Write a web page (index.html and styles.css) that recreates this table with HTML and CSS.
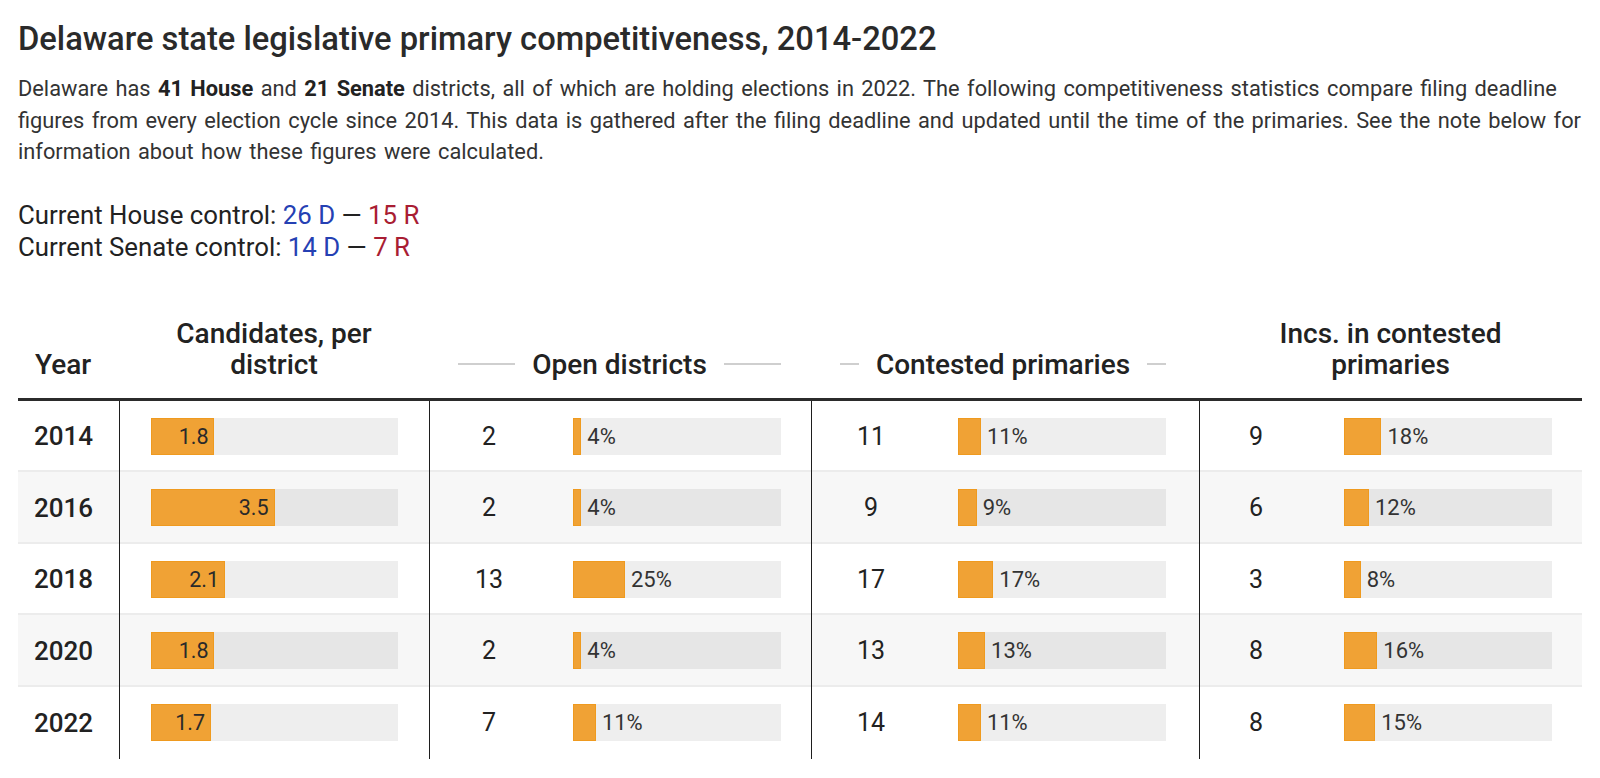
FILE: index.html
```html
<!DOCTYPE html>
<html lang="en">
<head>
<meta charset="utf-8">
<title>Delaware state legislative primary competitiveness, 2014-2022</title>
<link rel="stylesheet" href="styles.css">
</head>
<body>
<div class="page">
  <h1 class="title">Delaware state legislative primary competitiveness, 2014-2022</h1>
  <p class="intro">Delaware has <b>41 House</b> and <b>21 Senate</b> districts, all of which are holding elections in 2022. The following competitiveness statistics compare filing deadline figures from every election cycle since 2014. This data is gathered after the filing deadline and updated until the time of the primaries. See the note below for information about how these figures were calculated.</p>
  <div class="control">
    <div>Current House control: <span class="dem">26 D</span> — <span class="rep">15 R</span></div>
    <div>Current Senate control: <span class="dem">14 D</span> — <span class="rep">7 R</span></div>
  </div>

  <div class="table">
    <div class="head">
      <div class="hcell hyear">Year</div>
      <div class="hcell hcand">Candidates, per<br>district</div>
      <div class="hcell hopen"><span class="rule"></span><span>Open districts</span><span class="rule"></span></div>
      <div class="hcell hcont"><span class="rule"></span><span>Contested primaries</span><span class="rule"></span></div>
      <div class="hcell hinc">Incs. in contested<br>primaries</div>
    </div>

    <div class="row">
      <div class="cell year">2014</div>
      <div class="cell cand"><div class="track"><div class="bar in" style="width:25.7%">1.8</div></div></div>
      <div class="cell pair"><div class="num">2</div><div class="track"><div class="bar" style="width:4%"></div><span class="pct">4%</span></div></div>
      <div class="cell pair cont"><div class="num">11</div><div class="track"><div class="bar" style="width:11%"></div><span class="pct">11%</span></div></div>
      <div class="cell pair inc"><div class="num">9</div><div class="track"><div class="bar" style="width:18%"></div><span class="pct">18%</span></div></div>
    </div>
    <div class="row alt">
      <div class="cell year">2016</div>
      <div class="cell cand"><div class="track"><div class="bar in" style="width:50%">3.5</div></div></div>
      <div class="cell pair"><div class="num">2</div><div class="track"><div class="bar" style="width:4%"></div><span class="pct">4%</span></div></div>
      <div class="cell pair cont"><div class="num">9</div><div class="track"><div class="bar" style="width:9%"></div><span class="pct">9%</span></div></div>
      <div class="cell pair inc"><div class="num">6</div><div class="track"><div class="bar" style="width:12%"></div><span class="pct">12%</span></div></div>
    </div>
    <div class="row">
      <div class="cell year">2018</div>
      <div class="cell cand"><div class="track"><div class="bar in" style="width:30%">2.1</div></div></div>
      <div class="cell pair"><div class="num">13</div><div class="track"><div class="bar" style="width:25%"></div><span class="pct">25%</span></div></div>
      <div class="cell pair cont"><div class="num">17</div><div class="track"><div class="bar" style="width:17%"></div><span class="pct">17%</span></div></div>
      <div class="cell pair inc"><div class="num">3</div><div class="track"><div class="bar" style="width:8%"></div><span class="pct">8%</span></div></div>
    </div>
    <div class="row alt">
      <div class="cell year">2020</div>
      <div class="cell cand"><div class="track"><div class="bar in" style="width:25.7%">1.8</div></div></div>
      <div class="cell pair"><div class="num">2</div><div class="track"><div class="bar" style="width:4%"></div><span class="pct">4%</span></div></div>
      <div class="cell pair cont"><div class="num">13</div><div class="track"><div class="bar" style="width:13%"></div><span class="pct">13%</span></div></div>
      <div class="cell pair inc"><div class="num">8</div><div class="track"><div class="bar" style="width:16%"></div><span class="pct">16%</span></div></div>
    </div>
    <div class="row last">
      <div class="cell year">2022</div>
      <div class="cell cand"><div class="track"><div class="bar in" style="width:24.3%">1.7</div></div></div>
      <div class="cell pair"><div class="num">7</div><div class="track"><div class="bar" style="width:11%"></div><span class="pct">11%</span></div></div>
      <div class="cell pair cont"><div class="num">14</div><div class="track"><div class="bar" style="width:11%"></div><span class="pct">11%</span></div></div>
      <div class="cell pair inc"><div class="num">8</div><div class="track"><div class="bar" style="width:15%"></div><span class="pct">15%</span></div></div>
    </div>
  </div>
</div>
</body>
</html>
```

FILE: styles.css
```css
* { box-sizing: border-box; }
html, body { margin: 0; padding: 0; background: #fff; }
body {
  font-family: Roboto, "Liberation Sans", Arial, sans-serif;
  color: #222;
}
.page {
  padding: 21px 0 0 18px;
}
.title {
  margin: 0;
  font-size: 32.7px;
  line-height: 36px;
  font-weight: 500;
  color: #2a2a2a;
}
.intro {
  margin: 16px 0 0;
  max-width: 1570px;
  font-size: 21.8px;
  word-spacing: 2px;
  line-height: 31.5px;
  color: #333;
  font-weight: 400;
}
.intro b { font-weight: 700; color: #222; }
.control {
  margin-top: 31px;
  font-size: 25.8px;
  line-height: 32px;
  color: #222;
}
.dem { color: #2540b3; }
.rep { color: #a91d33; }

.table {
  margin-top: 55px;
  width: 1564px;
}
.head, .row {
  display: grid;
  grid-template-columns: 101px 310px 382px 388px 383px;
}
.head {
  align-items: end;
  border-bottom: 3px solid #2b2b2b;
  padding-bottom: 18px;
}
.hcell {
  font-size: 28px;
  line-height: 31px;
  font-weight: 500;
  color: #222;
  text-align: center;
}
.hyear { text-align: left; padding-left: 17px; }
.hopen, .hcont {
  display: flex;
  align-items: center;
  gap: 17px;
  padding: 0 30px 0 29px;
}
.hcont { padding-right: 33px; }
.rule {
  flex: 1;
  height: 2px;
  background: #cfcfcf;
}

.row {
  height: 71.5px;
  border-bottom: 2px solid #ececec;
}
.row.alt { background: #f7f7f7; }
.row.last { border-bottom: 0; height: 72px; }
.cell {
  display: flex;
  align-items: center;
  border-left: 1px solid #1e1e1e;
  margin-bottom: -2px;
}
.row.last .cell { margin-bottom: 0; }
.cell.year {
  border-left: 0;
  padding-left: 16px;
  font-size: 26px;
  font-weight: 500;
  color: #222;
}
.cand { padding: 0 31px 0 31px; }
.track {
  height: 37px;
  flex: 1;
  background: rgba(0, 0, 0, 0.068);
  display: flex;
  align-items: center;
}
.bar {
  height: 100%;
  background: #f0a235;
  border: 1px solid #ef9a1f;
  flex: none;
}
.bar.in {
  display: flex;
  align-items: center;
  justify-content: flex-end;
  padding-right: 5px;
  font-size: 21.5px;
  color: #2a2a2a;
}
.pct {
  padding-left: 6px;
  font-size: 22px;
  color: #333;
}
.pair {
  padding: 0 30px 0 29px;
  justify-content: space-between;
}
.pair.cont { padding-right: 33px; }
.pair.inc { padding-left: 26px; }
.num {
  width: 60px;
  text-align: center;
  font-size: 25px;
  color: #222;
}
.pair .track { flex: none; width: 208px; }
```
